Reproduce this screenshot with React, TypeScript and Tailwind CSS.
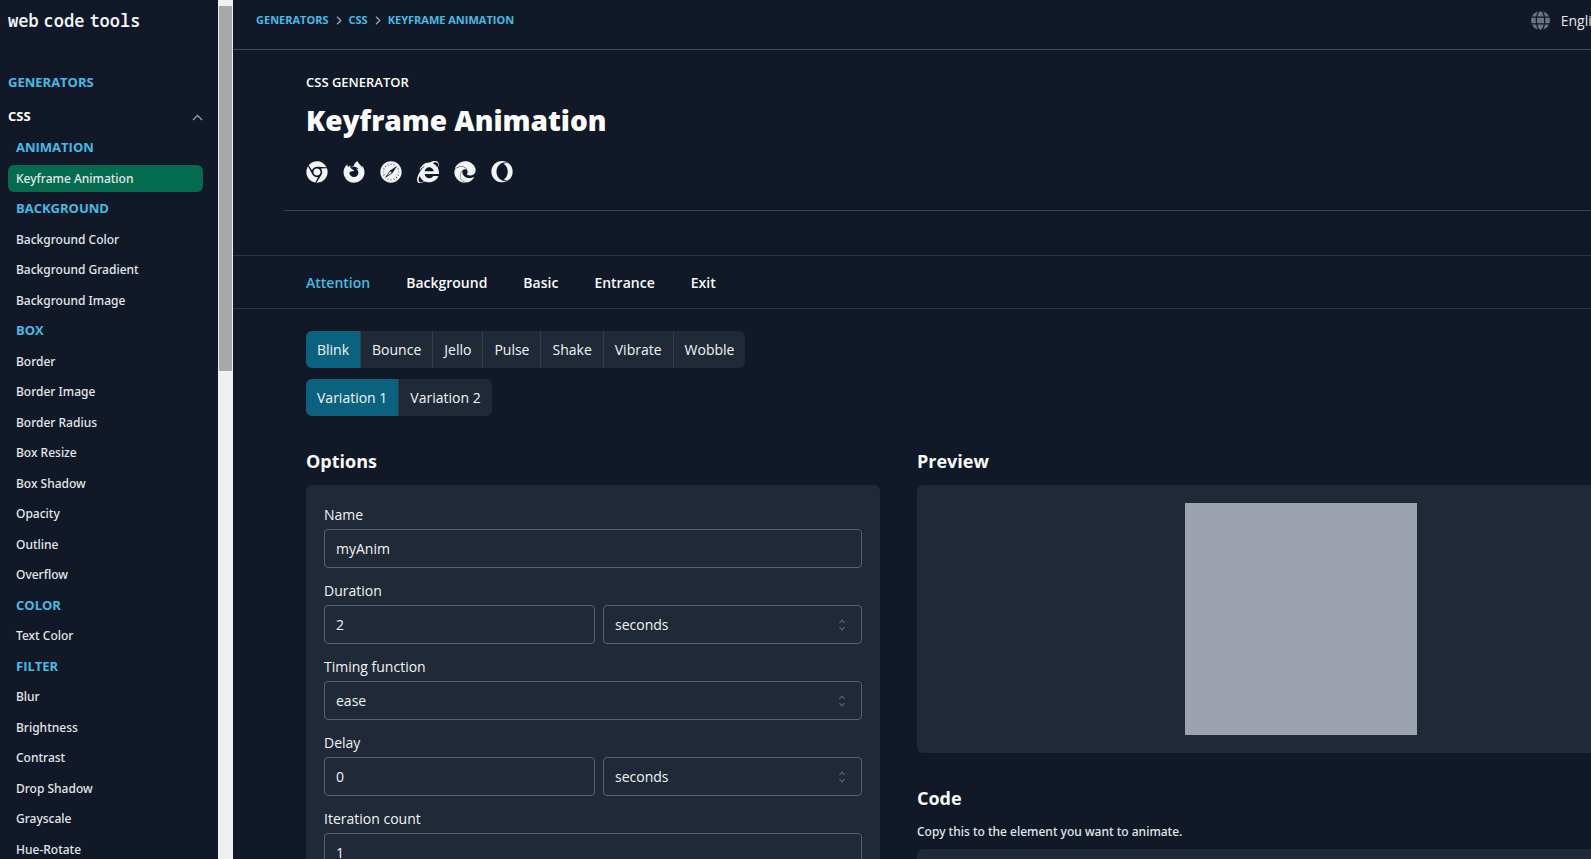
import { useState } from 'react';
import type { ReactNode } from 'react';
import { FaChrome, FaEdge, FaFirefoxBrowser, FaInternetExplorer, FaOpera, FaSafari } from 'react-icons/fa';

type NavEntry = { label: string; heading?: boolean };

const nav: NavEntry[] = [
  { label: 'ANIMATION', heading: true },
  { label: 'Keyframe Animation' },
  { label: 'BACKGROUND', heading: true },
  { label: 'Background Color' },
  { label: 'Background Gradient' },
  { label: 'Background Image' },
  { label: 'BOX', heading: true },
  { label: 'Border' },
  { label: 'Border Image' },
  { label: 'Border Radius' },
  { label: 'Box Resize' },
  { label: 'Box Shadow' },
  { label: 'Opacity' },
  { label: 'Outline' },
  { label: 'Overflow' },
  { label: 'COLOR', heading: true },
  { label: 'Text Color' },
  { label: 'FILTER', heading: true },
  { label: 'Blur' },
  { label: 'Brightness' },
  { label: 'Contrast' },
  { label: 'Drop Shadow' },
  { label: 'Grayscale' },
  { label: 'Hue-Rotate' },
];

const browsers = [
  { name: 'Chrome', Icon: FaChrome },
  { name: 'Firefox', Icon: FaFirefoxBrowser },
  { name: 'Safari', Icon: FaSafari },
  { name: 'Internet Explorer', Icon: FaInternetExplorer },
  { name: 'Edge', Icon: FaEdge },
  { name: 'Opera', Icon: FaOpera },
];

function Sidebar() {
  return (
    <aside className="flex shrink-0">
      <nav className="w-[218px] shrink-0 pl-2 pr-[15px]" aria-label="Generators">
        <a
          href="#home"
          className="flex h-[42px] items-center gap-[5px] font-['Noto_Sans_Mono','DejaVu_Sans_Mono',monospace] text-[17px] font-semibold text-gray-100"
        >
          <span>web</span>
          <span>code</span>
          <span>tools</span>
        </a>
        <h2 className="mt-[30px] text-[13px] leading-5 font-bold text-[#45bbe4]">GENERATORS</h2>
        <button type="button" className="mt-[15px] flex h-5 w-full items-center justify-between text-[13px] font-bold text-white">
          CSS
          <svg className="h-[9px] w-[11px] text-gray-400" viewBox="0 0 11 9" fill="none" stroke="currentColor" aria-hidden="true">
            <path d="M1 7l4.5-4.5L10 7" strokeWidth="1.3" />
          </svg>
        </button>
        <ul className="mt-[6px]">
          {nav.map((entry) => (
            <li key={entry.label} className="flex items-center odd:h-[30px] even:h-[31px]">
              {entry.heading ? (
                <h3 className="px-2 text-[13px] font-bold text-[#45bbe4]">{entry.label}</h3>
              ) : (
                <a
                  href={'#' + entry.label}
                  className={
                    entry.label === 'Keyframe Animation'
                      ? "flex h-[27px] w-full items-center rounded-md bg-[#046c4e] px-2 font-['Noto_Sans',sans-serif] text-[12px] font-medium text-gray-200"
                      : "flex h-[27px] w-full items-center px-2 font-['Noto_Sans',sans-serif] text-[12px] font-medium text-gray-200"
                  }
                >
                  {entry.label}
                </a>
              )}
            </li>
          ))}
        </ul>
      </nav>
      <div className="w-[15px] bg-[#f0f0f0] px-px pt-[6px]" aria-hidden="true">
        <div className="h-[365px] bg-[#a8a8a8]" />
      </div>
    </aside>
  );
}

function Crumbs() {
  const sep = (
    <svg className="h-[9px] w-[6px] text-gray-400" viewBox="0 0 6 9" fill="none" stroke="currentColor" aria-hidden="true">
      <path d="M1 .8l3.8 3.7L1 8.2" strokeWidth="1.3" />
    </svg>
  );
  return (
    <nav className="flex items-center gap-[7px] text-[11px] font-bold text-[#45bbe4]" aria-label="Breadcrumb">
      <a href="#generators">GENERATORS</a>
      {sep}
      <a href="#css">CSS</a>
      {sep}
      <a href="#keyframe">KEYFRAME ANIMATION</a>
    </nav>
  );
}

function ButtonGroup({ items }: { items: string[] }) {
  const [active, setActive] = useState(items[0]);
  return (
    <div className="flex w-fit divide-x divide-[#323b49] overflow-hidden rounded-md bg-[#1f2937]">
      {items.map((item) => (
        <button
          key={item}
          type="button"
          onClick={() => setActive(item)}
          className={
            item === active
              ? 'h-[37px] bg-[#0b627e] px-[11px] text-[14px] text-gray-100'
              : 'h-[37px] px-[11px] text-[14px] text-gray-100'
          }
        >
          {item}
        </button>
      ))}
    </div>
  );
}

const control =
  'h-[39px] w-full appearance-none rounded border border-[#566070] bg-transparent px-[11px] text-[14px] text-gray-100';

function Select({ id, label, options }: { id: string; label?: string; options: string[] }) {
  return (
    <div className="relative">
      <select id={id} aria-label={label} className={control}>
        {options.map((option) => (
          <option key={option}>{option}</option>
        ))}
      </select>
      <svg
        className="pointer-events-none absolute inset-y-0 right-3 my-auto size-4 text-[#5b6474]"
        viewBox="0 0 20 20"
        fill="none"
        stroke="currentColor"
        strokeWidth="1.5"
        strokeLinecap="round"
        strokeLinejoin="round"
        aria-hidden="true"
      >
        <path d="M7 7l3-3 3 3m0 6l-3 3-3-3" />
      </svg>
    </div>
  );
}

function Field({ id, label, children }: { id: string; label: string; children: ReactNode }) {
  return (
    <div className="flex flex-col gap-[4px]">
      <label htmlFor={id} className="text-[14px] leading-5 text-gray-100">
        {label}
      </label>
      {children}
    </div>
  );
}

function Options() {
  return (
    <section>
      <h2 className="text-[18px] leading-6 font-bold text-gray-50">Options</h2>
      <form className="mt-[12px] flex flex-col gap-[13px] rounded-md bg-[#1f2937] px-[18px] pt-[20px] pb-6">
        <Field id="name" label="Name">
          <input id="name" className={control} defaultValue="myAnim" />
        </Field>
        <Field id="duration" label="Duration">
          <div className="grid grid-cols-[271fr_259fr] gap-2">
            <input id="duration" className={control} defaultValue="2" />
            <Select id="duration-unit" label="Duration unit" options={['seconds', 'milliseconds']} />
          </div>
        </Field>
        <Field id="timing" label="Timing function">
          <Select id="timing" options={['ease', 'linear']} />
        </Field>
        <Field id="delay" label="Delay">
          <div className="grid grid-cols-[271fr_259fr] gap-2">
            <input id="delay" className={control} defaultValue="0" />
            <Select id="delay-unit" label="Delay unit" options={['seconds', 'milliseconds']} />
          </div>
        </Field>
        <Field id="count" label="Iteration count">
          <input id="count" className={control} defaultValue="1" />
        </Field>
      </form>
    </section>
  );
}

function Preview() {
  return (
    <section>
      <h2 className="text-[18px] leading-6 font-bold text-gray-50">Preview</h2>
      <div className="mt-[12px] flex justify-center rounded-md bg-[#1f2937] py-[18px]">
        <div className="size-[232px] bg-[#9ca3af]" />
      </div>
      <h2 className="mt-[33px] text-[18px] leading-6 font-bold text-gray-50">Code</h2>
      <p className="mt-[12px] font-['Noto_Sans',sans-serif] text-[12px] leading-5 font-medium text-gray-200">
        Copy this to the element you want to animate.
      </p>
      <div className="mt-[7px] h-40 rounded-md bg-[#1f2937]" />
    </section>
  );
}

export default function App() {
  const [tab, setTab] = useState('Attention');
  return (
    <div className="flex h-screen overflow-hidden bg-[#111827] font-['Open_Sans','Noto_Sans',sans-serif] text-gray-200">
      <Sidebar />
      <main className="min-w-[1473px] flex-1">
        <header className="flex h-[50px] items-center justify-between border-b border-[#454b59] pr-[99px] pb-[8px] pl-[23px]">
          <Crumbs />
          <button type="button" className="flex items-center gap-[11px] text-[14px] text-gray-200">
            <svg className="size-[19px] text-gray-500" viewBox="0 0 19 19" aria-hidden="true">
              <circle cx="9.5" cy="9.5" r="9.5" fill="currentColor" />
              <g fill="none" stroke="#111827" strokeWidth="1.2">
                <path d="M0 6.2h19M0 12.8h19" />
                <ellipse cx="9.5" cy="9.5" rx="4.2" ry="10" />
              </g>
            </svg>
            English
          </button>
        </header>
        <div className="ml-[51px] border-b border-[#3a414f] px-[22px] pt-[22px] pb-[27px]">
          <p className="text-[13px] leading-5 font-semibold text-white">CSS GENERATOR</p>
          <h1 className="mt-[8px] text-[28px] leading-10 font-black text-white">Keyframe Animation</h1>
          <ul className="mt-[21px] flex gap-[15px]">
            {browsers.map(({ name, Icon }) => (
              <li key={name}>
                <Icon className="size-[22px] text-gray-100" title={name} />
              </li>
            ))}
          </ul>
        </div>
        <div className="mt-[44px] flex h-[54px] items-center gap-[36px] border-y border-[#2d3442] px-[73px] text-[14px] font-semibold">
          {['Attention', 'Background', 'Basic', 'Entrance', 'Exit'].map((name) => (
            <button
              key={name}
              type="button"
              onClick={() => setTab(name)}
              className={name === tab ? 'text-[#45bbe4]' : 'text-gray-50'}
            >
              {name}
            </button>
          ))}
        </div>
        <div className="flex flex-col gap-[11px] px-[73px] pt-[22px]">
          <ButtonGroup items={['Blink', 'Bounce', 'Jello', 'Pulse', 'Shake', 'Vibrate', 'Wobble']} />
          <ButtonGroup items={['Variation 1', 'Variation 2']} />
        </div>
        <div className="mt-[33px] grid grid-cols-[574fr_767fr] gap-[37px] pr-[22px] pl-[73px]">
          <Options />
          <Preview />
        </div>
      </main>
    </div>
  );
}
